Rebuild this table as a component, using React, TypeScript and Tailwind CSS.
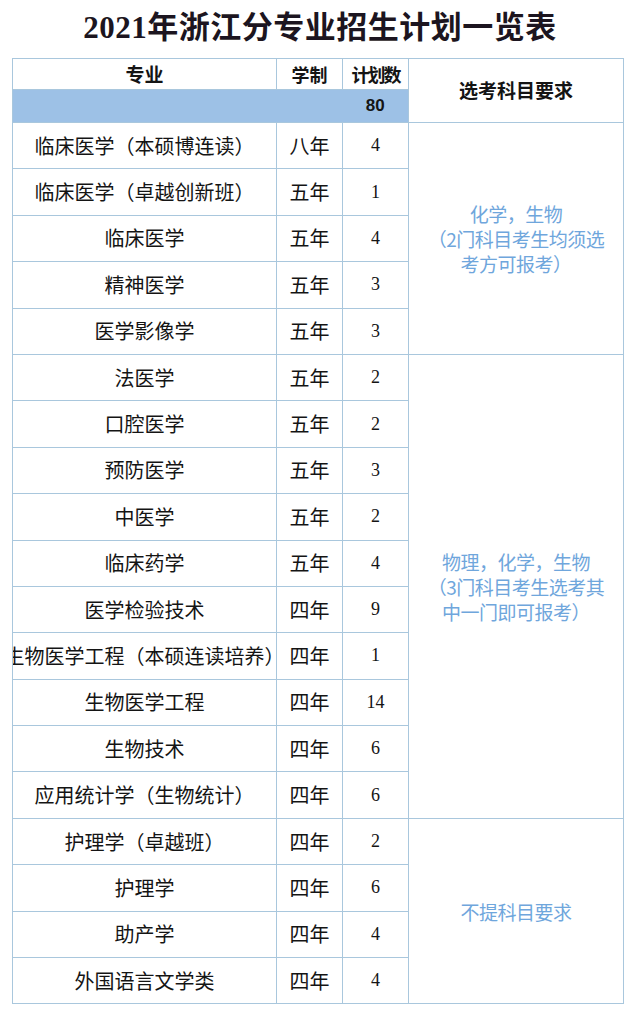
import React from "react";

type Row = { name: string; years: string; count: string };

const rows: Row[] = [
	{ name: "临床医学（本硕博连读）", years: "八年", count: "4" },
	{ name: "临床医学（卓越创新班）", years: "五年", count: "1" },
	{ name: "临床医学", years: "五年", count: "4" },
	{ name: "精神医学", years: "五年", count: "3" },
	{ name: "医学影像学", years: "五年", count: "3" },
	{ name: "法医学", years: "五年", count: "2" },
	{ name: "口腔医学", years: "五年", count: "2" },
	{ name: "预防医学", years: "五年", count: "3" },
	{ name: "中医学", years: "五年", count: "2" },
	{ name: "临床药学", years: "五年", count: "4" },
	{ name: "医学检验技术", years: "四年", count: "9" },
	{ name: "生物医学工程（本硕连读培养）", years: "四年", count: "1" },
	{ name: "生物医学工程", years: "四年", count: "14" },
	{ name: "生物技术", years: "四年", count: "6" },
	{ name: "应用统计学（生物统计）", years: "四年", count: "6" },
	{ name: "护理学（卓越班）", years: "四年", count: "2" },
	{ name: "护理学", years: "四年", count: "6" },
	{ name: "助产学", years: "四年", count: "4" },
	{ name: "外国语言文学类", years: "四年", count: "4" },
];

// merged requirement cells: start row -> span + lines
const groups: Record<number, { span: number; lines: string[] }> = {
	0: { span: 5, lines: ["化学，生物", "（2门科目考生均须选", "考方可报考）"] },
	5: { span: 10, lines: ["物理，化学，生物", "（3门科目考生选考其", "中一门即可报考）"] },
	15: { span: 4, lines: ["不提科目要求"] },
};

const cjk = "font-['Noto_Sans_CJK_SC',sans-serif]";
const cell = "border border-[#a9c7dd] p-0";

export default function App() {
	return (
		<div className={`w-[640px] h-[1022px] bg-white ${cjk} text-[#141414]`}>
			<h1 className="h-[58px] flex items-center justify-center pb-[2px] text-[31px] font-bold font-['Liberation_Serif','Noto_Sans_CJK_SC',serif] text-[#1c1520] tracking-[0.5px]">
				2021年浙江分专业招生计划一览表
			</h1>

			<table className="ml-[12px] w-[612px] table-fixed border-collapse">
				<colgroup>
					<col className="w-[264px]" />
					<col className="w-[66px]" />
					<col className="w-[66px]" />
					<col />
				</colgroup>
				<tbody>
					<tr className="h-[31px]">
						<td className={`${cell} text-center text-[19px] font-bold`}>专业</td>
						<td className={`${cell} text-center text-[18px] font-bold`}>学制</td>
						<td className={`${cell} text-center text-[18px] font-bold tracking-[-2px]`}>计划数</td>
						<td rowSpan={2} className={`${cell} text-center text-[19px] font-bold`}>
							选考科目要求
						</td>
					</tr>
					<tr className="h-[33px] bg-[#9dc1e6]">
						<td colSpan={2} className="border-y border-l border-[#a9c7dd]"></td>
						<td className="border-y border-[#a9c7dd] text-center text-[17px] font-bold font-['Liberation_Sans',sans-serif]">
							80
						</td>
					</tr>
					{rows.map((r, i) => (
						<tr key={i} className="h-[46.4px]">
							<td className={`${cell} text-center text-[20px]`}>
								{r.name.length > 12 ? (
									<div className="flex justify-center overflow-hidden whitespace-nowrap">
										<span className="shrink-0">{r.name}</span>
									</div>
								) : (
									r.name
								)}
							</td>
							<td className={`${cell} text-center text-[20px]`}>{r.years}</td>
							<td className={`${cell} text-center text-[18px] font-['Liberation_Serif',serif]`}>
								{r.count}
							</td>
							{groups[i] && (
								<td
									rowSpan={groups[i].span}
									className={`${cell} text-center text-[19px] leading-[25px] text-[#6fa6dc]`}
								>
									{groups[i].lines.map((l, j) => (
										<div key={j} className="whitespace-nowrap tracking-[-0.5px]">
											{l}
										</div>
									))}
								</td>
							)}
						</tr>
					))}
				</tbody>
			</table>
		</div>
	);
}
